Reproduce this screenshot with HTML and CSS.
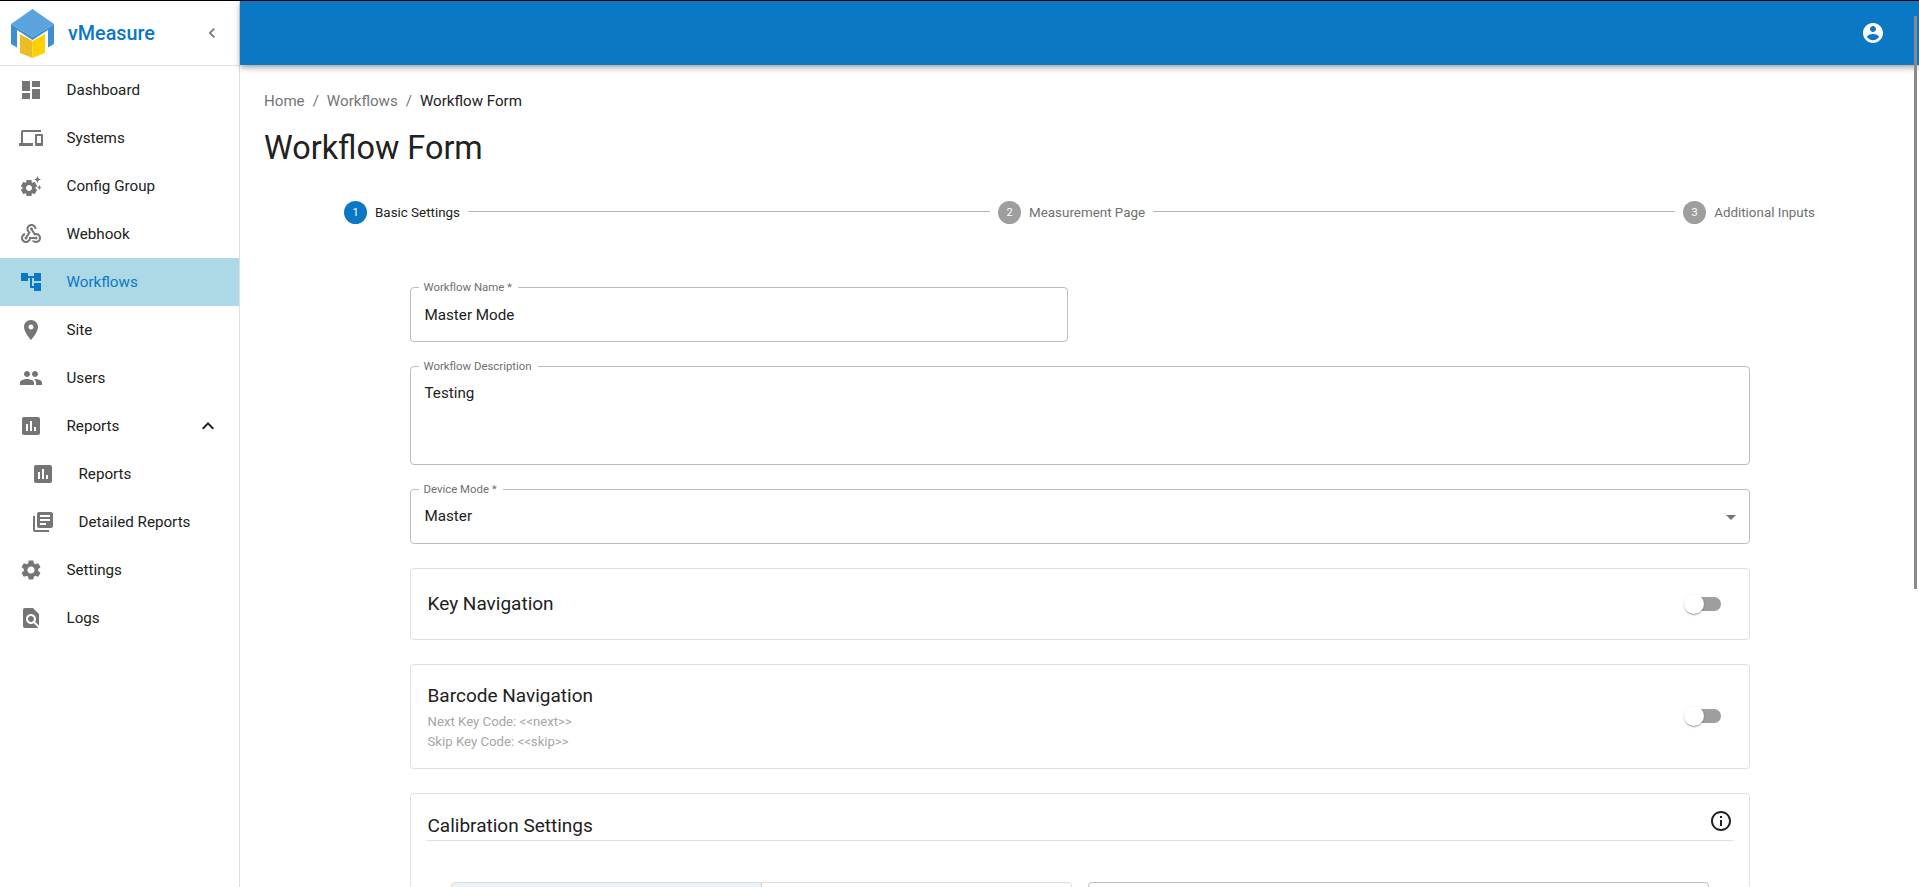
FILE: index.html
```html
<!DOCTYPE html>
<html lang="en">
<head>
<meta charset="utf-8">
<title>Workflow Form - vMeasure</title>
<link rel="stylesheet" href="styles.css">
</head>
<body>
<div class="page">
  <aside class="sidebar">
    <div class="brand">
      <svg class="logo" viewBox="0 0 44 50" width="44" height="50">
        <path fill="#3d8fd2" d="M0 15v20l6 3.5V21l15.5 10L37 21v17.5l6-3.5V15L21.5 28z"/>
        <path fill="#5ba3dc" d="M21.5 0L43 15 21.5 28 0 15z"/>
        <path fill="#eabc26" d="M9 25l12.5 7v17L9 44z"/>
        <path fill="#ffd100" d="M34 25l-12.5 7v17L34 44z"/>
      </svg>
      <span class="brand-name">vMeasure</span>
      <svg class="collapse" viewBox="0 0 24 24" width="20" height="20"><path d="M15.41 7.41L14 6l-6 6 6 6 1.41-1.41L10.83 12z"/></svg>
    </div>
    <nav class="nav">
      <a class="nav-item"><svg class="icon" viewBox="0 0 24 24"><path d="M3 13h8V3H3v10zm0 8h8v-6H3v6zm10 0h8V11h-8v10zm0-18v6h8V3h-8z"/></svg><span>Dashboard</span></a>
      <a class="nav-item"><svg class="icon" viewBox="0 0 24 24"><path d="M4 6h18V4H4c-1.1 0-2 .9-2 2v11H0v3h14v-3H4V6zm19 2h-6c-.55 0-1 .45-1 1v10c0 .55.45 1 1 1h6c.55 0 1-.45 1-1V9c0-.55-.45-1-1-1zm-1 9h-4v-7h4v7z"/></svg><span>Systems</span></a>
      <a class="nav-item"><svg class="icon" viewBox="0 0 24 24"><path d="M17.41 6.59 15 5.5l2.41-1.09L18.5 2l1.09 2.41L22 5.5l-2.41 1.09L18.5 9l-1.09-2.41zm3.87 6.13L20.5 11l-.78 1.72-1.72.78 1.72.78.78 1.72.78-1.72L23 14l-1.72-.78zm-5.04 1.65 1.94 1.47-2.5 4.33-2.24-.94c-.2.13-.42.26-.64.37l-.3 2.4h-5l-.3-2.41c-.22-.11-.43-.23-.64-.37l-2.24.94-2.5-4.33 1.94-1.47c-.01-.11-.01-.24-.01-.37s0-.26.01-.38l-1.94-1.47 2.5-4.33 2.24.94c.2-.13.42-.26.64-.37L7.5 6h5l.3 2.41c.22.11.43.23.64.37l2.24-.94 2.5 4.33-1.94 1.47c.01.12.01.25.01.37s0 .24-.01.36zM13 14c0-1.66-1.34-3-3-3s-3 1.34-3 3 1.34 3 3 3 3-1.34 3-3z"/></svg><span>Config Group</span></a>
      <a class="nav-item"><svg class="icon" viewBox="0 0 24 24"><path d="M10 15h5.88c.27-.31.67-.5 1.12-.5.83 0 1.5.67 1.5 1.5s-.67 1.5-1.5 1.5c-.44 0-.84-.19-1.12-.5H11.9c-.46 2.28-2.48 4-4.9 4-2.76 0-5-2.24-5-5 0-2.42 1.72-4.44 4-4.9v2.07c-1.16.41-2 1.53-2 2.83 0 1.65 1.35 3 3 3s3-1.35 3-3v-2zm2.5-11c1.65 0 3 1.35 3 3h2c0-2.76-2.24-5-5-5s-5 2.24-5 5c0 1.43.6 2.71 1.55 3.62l-2.35 3.9c-.68.14-1.2.75-1.2 1.48 0 .83.67 1.5 1.5 1.5s1.5-.67 1.5-1.5c0-.16-.02-.31-.07-.45l3.38-5.63C10.49 9.61 9.5 8.42 9.5 7c0-1.65 1.35-3 3-3zm4.5 9c-.64 0-1.23.2-1.72.54l-3.05-5.07C11.53 8.35 11 7.74 11 7c0-.83.67-1.5 1.5-1.5S14 6.17 14 7c0 .15-.02.29-.06.43l2.19 3.65c.28-.05.57-.08.87-.08 2.76 0 5 2.24 5 5s-2.24 5-5 5c-1.85 0-3.47-1.01-4.33-2.5h2.67c.48.32 1.05.5 1.66.5 1.65 0 3-1.35 3-3s-1.35-3-3-3z"/></svg><span>Webhook</span></a>
      <a class="nav-item active"><svg class="icon" viewBox="0 0 24 24"><path d="M22 11V3h-7v3H9V3H2v8h7V8h2v10h4v3h7v-8h-7v3h-2V8h2v3z"/></svg><span>Workflows</span></a>
      <a class="nav-item"><svg class="icon" viewBox="0 0 24 24"><path d="M12 2C8.13 2 5 5.13 5 9c0 5.25 7 13 7 13s7-7.75 7-13c0-3.87-3.13-7-7-7zm0 9.5c-1.38 0-2.5-1.12-2.5-2.5s1.12-2.5 2.5-2.5 2.5 1.12 2.5 2.5-1.12 2.5-2.5 2.5z"/></svg><span>Site</span></a>
      <a class="nav-item"><svg class="icon" viewBox="0 0 24 24"><path d="M16 11c1.66 0 2.99-1.34 2.99-3S17.66 5 16 5c-1.66 0-3 1.34-3 3s1.34 3 3 3zm-8 0c1.66 0 2.99-1.34 2.99-3S9.66 5 8 5C6.34 5 5 6.34 5 8s1.34 3 3 3zm0 2c-2.33 0-7 1.17-7 3.5V19h14v-2.5c0-2.33-4.67-3.5-7-3.5zm8 0c-.29 0-.62.02-.97.05 1.16.84 1.97 1.97 1.97 3.45V19h6v-2.5c0-2.33-4.67-3.5-7-3.5z"/></svg><span>Users</span></a>
      <a class="nav-item"><svg class="icon" viewBox="0 0 24 24"><path d="M19 3H5c-1.1 0-2 .9-2 2v14c0 1.1.9 2 2 2h14c1.1 0 2-.9 2-2V5c0-1.1-.9-2-2-2zM9 17H7v-7h2v7zm4 0h-2V7h2v10zm4 0h-2v-4h2v4z"/></svg><span>Reports</span><svg class="expand" viewBox="0 0 24 24"><path d="M12 8l-6 6 1.41 1.41L12 10.83l4.59 4.58L18 14z"/></svg></a>
      <a class="nav-item sub"><svg class="icon" viewBox="0 0 24 24"><path d="M19 3H5c-1.1 0-2 .9-2 2v14c0 1.1.9 2 2 2h14c1.1 0 2-.9 2-2V5c0-1.1-.9-2-2-2zM9 17H7v-7h2v7zm4 0h-2V7h2v10zm4 0h-2v-4h2v4z"/></svg><span>Reports</span></a>
      <a class="nav-item sub"><svg class="icon" viewBox="0 0 24 24"><path d="M4 6H2v14c0 1.1.9 2 2 2h14v-2H4V6zm16-4H8c-1.1 0-2 .9-2 2v12c0 1.1.9 2 2 2h12c1.1 0 2-.9 2-2V4c0-1.1-.9-2-2-2zm-1 9H9V9h10v2zm-4 4H9v-2h6v2zm4-8H9V5h10v2z"/></svg><span>Detailed Reports</span></a>
      <a class="nav-item"><svg class="icon" viewBox="0 0 24 24"><path d="M19.14 12.94c.04-.3.06-.61.06-.94 0-.32-.02-.64-.07-.94l2.03-1.58c.18-.14.23-.41.12-.61l-1.92-3.32c-.12-.22-.37-.29-.59-.22l-2.39.96c-.5-.38-1.03-.7-1.62-.94l-.36-2.54c-.04-.24-.24-.41-.48-.41h-3.84c-.24 0-.43.17-.47.41l-.36 2.54c-.59.24-1.13.57-1.62.94l-2.39-.96c-.22-.08-.47 0-.59.22L2.74 8.87c-.12.21-.08.47.12.61l2.03 1.58c-.05.3-.09.63-.09.94s.02.64.07.94l-2.03 1.58c-.18.14-.23.41-.12.61l1.92 3.32c.12.22.37.29.59.22l2.39-.96c.5.38 1.03.7 1.62.94l.36 2.54c.05.24.24.41.48.41h3.84c.24 0 .44-.17.47-.41l.36-2.54c.59-.24 1.13-.56 1.62-.94l2.39.96c.22.08.47 0 .59-.22l1.92-3.32c.12-.22.07-.47-.12-.61l-2.01-1.58zM12 15.6c-1.98 0-3.6-1.62-3.6-3.6s1.62-3.6 3.6-3.6 3.6 1.62 3.6 3.6-1.62 3.6-3.6 3.6z"/></svg><span>Settings</span></a>
      <a class="nav-item"><svg class="icon" viewBox="0 0 24 24"><path d="M20 19.59V8l-6-6H6c-1.1 0-1.99.9-1.99 2L4 20c0 1.1.89 2 1.99 2H18c.45 0 .85-.15 1.19-.4l-4.43-4.43c-.8.52-1.74.83-2.76.83-2.76 0-5-2.24-5-5s2.24-5 5-5 5 2.24 5 5c0 1.02-.31 1.96-.83 2.75L20 19.59zM9 13c0 1.66 1.34 3 3 3s3-1.34 3-3-1.34-3-3-3-3 1.34-3 3z"/></svg><span>Logs</span></a>
    </nav>
  </aside>
  <div class="content">
    <header class="appbar">
      <svg class="account" viewBox="0 0 24 24"><path d="M12 2C6.48 2 2 6.48 2 12s4.48 10 10 10 10-4.48 10-10S17.52 2 12 2zm0 3c1.66 0 3 1.34 3 3s-1.34 3-3 3-3-1.34-3-3 1.34-3 3-3zm0 14.2c-2.5 0-4.71-1.28-6-3.22.03-1.99 4-3.08 6-3.08 1.99 0 5.97 1.09 6 3.08-1.29 1.94-3.5 3.22-6 3.22z"/></svg>
    </header>
    <main class="main">
      <div class="crumbs"><span class="crumb">Home</span><span class="sep">/</span><span class="crumb">Workflows</span><span class="sep">/</span><span class="crumb-current">Workflow Form</span></div>
      <h1 class="title">Workflow Form</h1>
      <div class="stepper">
        <div class="step current"><span class="step-num">1</span><span class="step-label">Basic Settings</span></div>
        <div class="connector"></div>
        <div class="step"><span class="step-num">2</span><span class="step-label">Measurement Page</span></div>
        <div class="connector"></div>
        <div class="step"><span class="step-num">3</span><span class="step-label">Additional Inputs</span></div>
      </div>
      <form class="form">
        <div class="field field-name"><label class="float">Workflow Name *</label><span class="value">Master Mode</span></div>
        <div class="field field-desc"><label class="float">Workflow Description</label><span class="value">Testing</span></div>
        <div class="field field-select"><label class="float">Device Mode *</label><span class="value">Master</span><svg class="caret" viewBox="0 0 24 24"><path d="M7 10l5 5 5-5z"/></svg></div>
        <section class="card card-key">
          <h2 class="card-title">Key Navigation</h2>
          <span class="switch"><span class="thumb"></span></span>
        </section>
        <section class="card card-barcode">
          <div class="card-text">
            <h2 class="card-title">Barcode Navigation</h2>
            <p class="hint">Next Key Code: &lt;&lt;next&gt;&gt;</p>
            <p class="hint">Skip Key Code: &lt;&lt;skip&gt;&gt;</p>
          </div>
          <span class="switch"><span class="thumb"></span></span>
        </section>
        <section class="card-calib">
          <div class="calib-head">
            <h2 class="card-title">Calibration Settings</h2>
            <svg class="info" viewBox="0 0 24 24"><path d="M11 7h2v2h-2zm0 4h2v6h-2zm1-9C6.48 2 2 6.48 2 12s4.48 10 10 10 10-4.48 10-10S17.52 2 12 2zm0 18c-4.41 0-8-3.59-8-8s3.59-8 8-8 8 3.59 8 8-3.59 8-8 8z"/></svg>
          </div>
          <div class="calib-row">
            <div class="tabs"><div class="tab tab-on"></div><div class="tab"></div></div>
            <div class="calib-field"></div>
          </div>
        </section>
      </form>
    </main>
  </div>
</div>
<div class="scrollbar"></div>
</body>
</html>
```
FILE: styles.css
```css
* { box-sizing: border-box; }
html, body { margin: 0; height: 100%; overflow: hidden; background: #fff; }
body { font-family: Roboto, "Liberation Sans", sans-serif; color: #212121; border-top: 1px solid #000; }
.page { display: flex; height: 886px; overflow: hidden; }

.sidebar { width: 240px; flex: none; border-right: 1px solid #e0e0e0; background: #fff; }
.brand { height: 65px; display: flex; align-items: center; border-bottom: 1px solid #e0e0e0; padding-left: 11px; }
.logo { flex: none; margin-top: 2px; }
.brand-name { margin-left: 13px; font-size: 19.8px; font-weight: 500; color: #0a78c4; }
.collapse { margin-left: 47px; fill: #757575; }
.nav { display: flex; flex-direction: column; }
.nav-item { height: 48px; display: flex; align-items: center; padding-left: 19px; font-size: 15.2px; color: #212121; }
.nav-item .icon { width: 24px; height: 24px; flex: none; fill: #757575; margin-right: 23.5px; }
.nav-item.sub { padding-left: 31px; }
.nav-item.active { background: #add8e6; color: #0a78c4; }
.nav-item.active .icon { fill: #0a78c4; }
.expand { width: 24px; height: 24px; fill: #212121; margin-left: auto; margin-right: 19px; }

.content { flex: 1; min-width: 0; display: flex; flex-direction: column; }
.appbar { height: 64px; flex: none; background: #0a78c4; display: flex; align-items: center; justify-content: flex-end; padding-right: 34px; box-shadow: 0 2px 4px -1px rgba(0,0,0,.2), 0 4px 5px 0 rgba(0,0,0,.14), 0 1px 10px 0 rgba(0,0,0,.12); position: relative; }
.account { width: 24px; height: 24px; fill: #fff; }
.main { padding: 26px 24px 0; }

.crumbs { display: flex; height: 20px; align-items: center; font-size: 15.1px; }
.crumb { color: #757575; }
.sep { color: #757575; margin: 0 8px; }
.crumb-current { color: #212121; }
.title { margin: 17px 0 0; font-size: 32.4px; line-height: 40px; font-weight: 400; color: #212121; }

.stepper { display: flex; align-items: center; margin: 32px 80px 0; height: 24px; }
.step { display: flex; align-items: center; flex: none; }
.step-num { width: 23px; height: 23px; border-radius: 50%; background: #9e9e9e; color: #fff; font-size: 11px; display: flex; align-items: center; justify-content: center; }
.step-label { margin-left: 8px; font-size: 13.4px; color: #6f6f6f; }
.step.current .step-num { background: #0a78c4; }
.step.current .step-label { color: #212121; }
.connector { flex: 1; height: 1px; background: #b5b5b5; margin: 0 8px; position: relative; top: -1px; }

.form { width: 1340px; margin: 63px auto 0; display: flex; flex-direction: column; gap: 24px; }
.field { position: relative; border: 1px solid #bdbdbd; border-radius: 4px; padding: 0 14px; display: flex; align-items: center; font-size: 15.2px; color: #212121; }
.field-name { width: 658px; height: 55px; }
.field-desc { height: 99px; align-items: flex-start; padding-top: 17px; }
.field-select { height: 55px; }
.float { position: absolute; top: -8px; left: 8px; padding: 0 6px 0 5px; background: #fff; font-size: 11.4px; line-height: 14px; color: #6f6f6f; }
.value { line-height: 20px; }
.field-desc .value, .field-select .value { margin-top: -1px; }
.caret { position: absolute; right: 6px; top: 15px; width: 24px; height: 24px; fill: #757575; }

.card { border: 1px solid #e0e0e0; border-radius: 4px; padding: 0 28px 0 17px; display: flex; align-items: center; justify-content: space-between; }
.card-key { height: 72px; }
.card-barcode { height: 105px; }
.card-barcode .card-text { margin-top: 2px; }
.card-barcode .switch { margin-bottom: 1px; }
.card-title { margin: 0; font-size: 19px; font-weight: 400; line-height: 24px; color: #212121; }
.hint { margin: 0; font-size: 13.2px; line-height: 19.5px; color: #a6a6a6; }
.hint:first-of-type { margin-top: 4px; }
.switch { position: relative; width: 34px; height: 14px; border-radius: 7px; background: #9e9e9e; flex: none; }
.thumb { position: absolute; left: -3px; top: -3px; width: 20px; height: 20px; border-radius: 50%; background: #fff; box-shadow: 0 2px 1px -1px rgba(0,0,0,.2), 0 1px 1px 0 rgba(0,0,0,.14), 0 1px 3px 0 rgba(0,0,0,.12); }

.card-calib { border: 1px solid #e0e0e0; border-radius: 4px; padding: 0 16px; height: 300px; }
.calib-head { height: 47px; display: flex; align-items: flex-end; justify-content: space-between; border-bottom: 1px solid #e0e0e0; padding-left: 1px; padding-bottom: 2px; position: relative; }
.info { position: absolute; right: 0; top: 15px; width: 24px; height: 24px; fill: #212121; }
.calib-row { display: flex; gap: 16px; padding: 41px 24px 0; }
.tabs { width: 621px; height: 48px; display: flex; border: 1px solid #dcdcdc; border-radius: 4px; overflow: hidden; }
.tab { flex: 1; }
.tab-on { flex: none; width: 310px; background: #e9f1f9; border-right: 1px solid #c5d0dc; }
.calib-field { flex: 1; height: 48px; border: 1px solid #bdbdbd; border-radius: 4px; }

.scrollbar { position: fixed; left: 1914px; top: 16px; width: 3px; height: 573px; background: #8a8a8a; }
```
